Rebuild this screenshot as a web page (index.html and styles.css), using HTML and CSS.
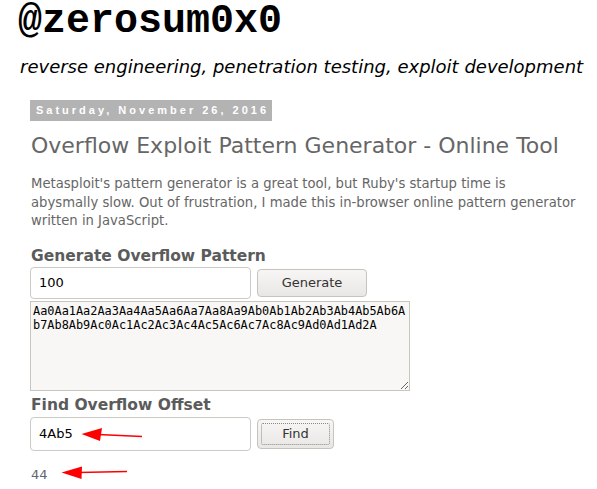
FILE: index.html
```html
<!DOCTYPE html>
<html>
<head>
<meta charset="utf-8">
<link rel="stylesheet" href="styles.css">
</head>
<body>
<header class="header">
  <h1 class="blog-title">@zerosum0x0</h1>
  <p class="blog-desc">reverse engineering, penetration testing, exploit development</p>
</header>
<main class="main">
  <h2 class="date-header"><span>Saturday, November 26, 2016</span></h2>
  <h3 class="post-title">Overflow Exploit Pattern Generator - Online Tool</h3>
  <p class="post-body">Metasploit's pattern generator is a great tool, but Ruby's startup time is<br>abysmally slow. Out of frustration, I made this in-browser online pattern generator<br>written in JavaScript.</p>
  <h4 class="section-title">Generate Overflow Pattern</h4>
  <div class="form-row">
    <input class="text-input" type="text" value="100">
    <button class="btn btn-gen">Generate</button>
  </div>
  <textarea class="pattern">Aa0Aa1Aa2Aa3Aa4Aa5Aa6Aa7Aa8Aa9Ab0Ab1Ab2Ab3Ab4Ab5Ab6Ab7Ab8Ab9Ac0Ac1Ac2Ac3Ac4Ac5Ac6Ac7Ac8Ac9Ad0Ad1Ad2A</textarea>
  <h4 class="section-title section-title-2">Find Overflow Offset</h4>
  <div class="form-row form-row-2">
    <input class="text-input text-input-2" type="text" value="4Ab5">
    <button class="btn btn-find"><span class="focus-ring">Find</span></button>
  </div>
  <div class="result">44</div>
</main>
<svg class="arrows" width="597" height="489" viewBox="0 0 597 489">
  <line x1="98" y1="434.5" x2="142" y2="436.5" stroke="#ff0000" stroke-width="1.6"/>
  <polygon points="81.5,434 102,428 100,441" fill="#ff0000"/>
  <line x1="78" y1="472.5" x2="127" y2="471.5" stroke="#ff0000" stroke-width="1.6"/>
  <polygon points="61.5,472.5 82,466.5 81.5,479" fill="#ff0000"/>
</svg>
</body>
</html>
```
FILE: styles.css
```css
html, body {
  margin: 0;
  padding: 0;
  background: #ffffff;
}
body {
  font-family: "DejaVu Sans", sans-serif;
  color: #666666;
  position: relative;
  width: 597px;
  height: 489px;
  overflow: hidden;
}
.header {
  padding: 0 0 0 18px;
}
.blog-title {
  margin: 0;
  padding-top: 2px;
  font-family: "Liberation Mono", monospace;
  font-weight: bold;
  font-size: 40px;
  line-height: 40px;
  color: #000000;
}
.blog-desc {
  margin: 14px 0 0 2px;
  font-family: "DejaVu Sans", sans-serif;
  font-style: italic;
  font-size: 18px;
  line-height: 22px;
  color: #000000;
}
.main {
  padding-left: 30px;
}
.date-header {
  display: flex;
  margin: 22px 0 0 0;
  font-family: "Liberation Sans", sans-serif;
  font-weight: bold;
  font-size: 11px;
  line-height: 21px;
  letter-spacing: 3px;
  color: #ffffff;
}
.date-header span {
  display: block;
  height: 21px;
  background: #b3b3b3;
  padding: 0 3px 0 6px;
}
.post-title {
  margin: 11px 0 0 1px;
  font-weight: normal;
  font-size: 22px;
  line-height: 28px;
  color: #666666;
}
.post-body {
  margin: 15px 0 0 1px;
  font-size: 13.2px;
  line-height: 18.5px;
}
.section-title {
  margin: 15px 0 0 1px;
  font-size: 15.5px;
  line-height: 20px;
  color: #5b5b5b;
}
.form-row {
  display: flex;
  align-items: center;
  gap: 6px;
  margin-top: 1px;
}
.text-input {
  box-sizing: border-box;
  width: 221px;
  height: 32px;
  margin: 0;
  border: 1px solid #cdc9c3;
  border-radius: 4px;
  padding: 0 8px;
  font-family: "DejaVu Sans", sans-serif;
  font-size: 13px;
  color: #000000;
  background: #ffffff;
}
.btn {
  box-sizing: border-box;
  height: 28px;
  margin: 0;
  border: 1px solid #c6c3bd;
  border-radius: 4px;
  background: linear-gradient(#f7f6f5, #e9e7e4);
  font-family: "DejaVu Sans", sans-serif;
  font-size: 13px;
  color: #333333;
  padding: 0;
}
.btn-gen {
  width: 110px;
}
.pattern {
  display: block;
  box-sizing: border-box;
  width: 380px;
  height: 90px;
  margin: 2px 0 0 0;
  border: 1px solid #c8c4be;
  background: #f8f7f5;
  padding: 2px 1px 2px 2px;
  font-family: "DejaVu Sans Mono", monospace;
  font-size: 11.9px;
  line-height: 14px;
  color: #000000;
  resize: both;
  overflow: hidden;
}
.section-title-2 {
  margin-top: 4px;
}
.form-row-2 {
  margin-top: 2px;
}
.text-input-2 {
  height: 34px;
}
.btn-find {
  width: 77px;
  height: 30px;
  padding: 3px;
}
.focus-ring {
  display: flex;
  align-items: center;
  justify-content: center;
  height: 100%;
  border: 1px dotted #8a8a8a;
  border-radius: 2px;
  box-sizing: border-box;
}
.result {
  margin: 16px 0 0 1px;
  font-size: 13px;
  line-height: 16px;
  color: #5f6670;
}
.arrows {
  position: absolute;
  left: 0;
  top: 0;
  pointer-events: none;
}
```
